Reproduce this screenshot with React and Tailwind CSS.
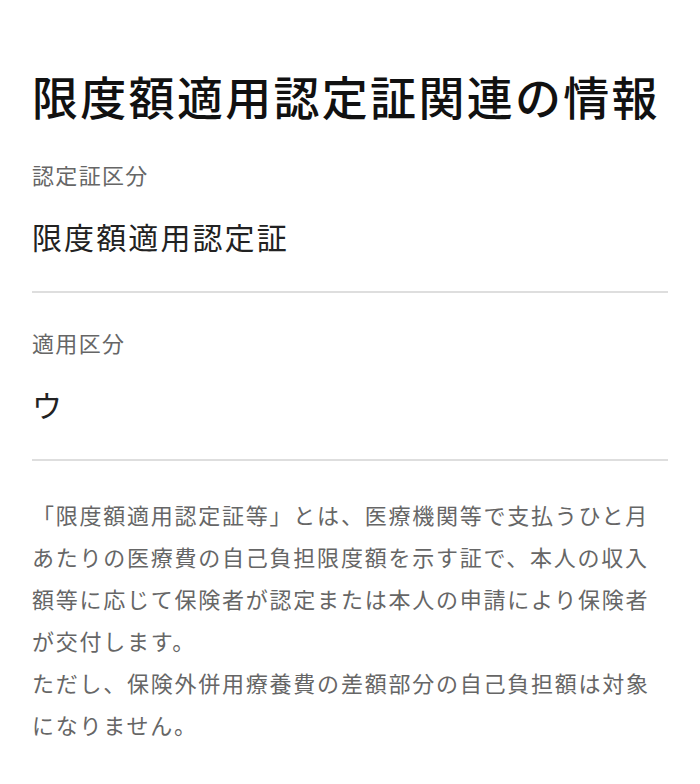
import React from "react";

const font = { fontFamily: '"Noto Sans CJK JP", "Noto Sans", sans-serif' };

function Field({ label, value }) {
  return (
    <div className="border-b-2 border-[#dedede] pt-[34px] pb-[35px]">
      <p className="text-[22px] leading-[30px] tracking-[0.06em] text-[#666]">{label}</p>
      <p className="mt-[27px] text-[30px] leading-[40px] tracking-[0.07em] text-[#222]">{value}</p>
    </div>
  );
}

export default function App() {
  return (
    <div className="min-h-[784px] bg-white px-8 pt-[65px]" style={font}>
      <h1 className="text-[46px] leading-[60px] tracking-[0.05em] font-medium text-[#111]">
        限度額適用認定証関連の情報
      </h1>
      <Field label="認定証区分" value="限度額適用認定証" />
      <Field label="適用区分" value="ウ" />
      <div className="pt-[32px] text-[22px] leading-[42px] tracking-[0.08em] text-[#666]">
        <p>「限度額適用認定証等」とは、医療機関等で支払うひと月あたりの医療費の自己負担限度額を示す証で、本人の収入額等に応じて保険者が認定または本人の申請により保険者が交付します。</p>
        <p>ただし、保険外併用療養費の差額部分の自己負担額は対象になりません。</p>
      </div>
    </div>
  );
}
